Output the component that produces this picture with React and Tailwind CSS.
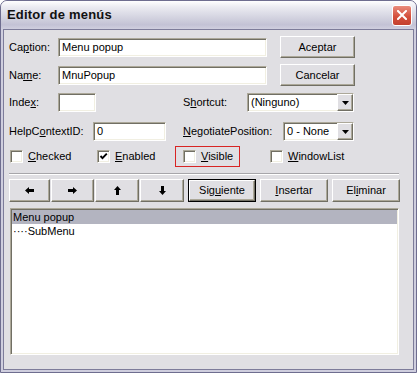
import React from 'react'

const FONT = { fontFamily: '"Liberation Sans", Arial, sans-serif' }

// sunken field border, classic XP look
const SUNKEN =
  'bg-white border border-t-[#aca899] border-l-[#aca899] border-b-white border-r-white shadow-[inset_1px_1px_0_#716f64,inset_-1px_-1px_0_#f1efe2]'
const RAISED =
  'bg-[#e0dfe3] border border-t-white border-l-white border-b-[#716f64] border-r-[#716f64] shadow-[inset_-1px_-1px_0_#aca899]'

function U({ children }) {
  return <span className="underline underline-offset-[1px]">{children}</span>
}

function Field({ className, value }) {
  return (
    <div className={`h-[19px] flex items-center pl-[3px] text-[11px] text-black ${SUNKEN} ${className}`}>
      {value}
    </div>
  )
}

function Btn({ className, children }) {
  return (
    <div className={`flex items-center justify-center text-[11px] text-black ${RAISED} ${className}`}>
      {children}
    </div>
  )
}

function Select({ className, value }) {
  return (
    <div className={`h-[19px] flex items-stretch text-[11px] text-black ${SUNKEN} ${className}`}>
      <div className="flex-1 flex items-center pl-[3px]">{value}</div>
      <div className={`w-[16px] flex items-center justify-center ${RAISED}`}>
        <svg width="7" height="4" viewBox="0 0 7 4">
          <polygon points="0,0 7,0 3.5,4" fill="#000" />
        </svg>
      </div>
    </div>
  )
}

function Check({ checked }) {
  return (
    <div className={`w-[13px] h-[13px] flex items-center justify-center ${SUNKEN}`}>
      {checked && (
        <svg width="9" height="9" viewBox="0 0 9 9">
          <path d="M1.5 4 L3.5 6.2 L7.8 1.6" stroke="#000" strokeWidth="1.9" fill="none" />
        </svg>
      )}
    </div>
  )
}

function Arrow({ dir }) {
  const pts = {
    left: '0,3.5 4,0 4,2 9,2 9,5 4,5 4,7',
    right: '9,3.5 5,0 5,2 0,2 0,5 5,5 5,7',
  }
  if (dir === 'left' || dir === 'right') {
    return (
      <svg width="9" height="7" viewBox="0 0 9 7">
        <polygon points={pts[dir]} fill="#000" />
      </svg>
    )
  }
  const v = dir === 'up' ? '3.5,0 7,4 5,4 5,9 2,9 2,4 0,4' : '3.5,9 7,5 5,5 5,0 2,0 2,5 0,5'
  return (
    <svg width="7" height="9" viewBox="0 0 7 9">
      <polygon points={v} fill="#000" />
    </svg>
  )
}

export default function App() {
  return (
    <div style={FONT} className="w-[417px] h-[373px] flex flex-col bg-[#cfcede] border border-[#6e6d8f] rounded-t-[7px] overflow-hidden">
      {/* title bar */}
      <div className="h-[28px] shrink-0 flex items-center justify-between pl-[6px] pr-[4px] bg-[linear-gradient(to_bottom,#ffffff_0%,#ececf2_20%,#d6d6e2_55%,#c3c2d5_85%,#d0cfdf_100%)]">
        <span className="text-[13px] font-bold text-[#111] tracking-[0.2px]">Editor de menús</span>
        <div className="w-[20px] h-[21px] rounded-[3px] border border-white bg-[linear-gradient(to_bottom,#e98c7c,#d4503d_55%,#c4402e)] flex items-center justify-center">
          <svg width="10" height="10" viewBox="0 0 10 10">
            <path d="M1 1 L9 9 M9 1 L1 9" stroke="#fff" strokeWidth="2" strokeLinecap="square" />
          </svg>
        </div>
      </div>

      {/* body */}
      <div className="flex-1 mx-[2px] mb-[2px] border border-[#7d7c9a] bg-[#e0dfe3] flex flex-col pl-[5px] pt-[6px] text-[11px] text-black">
        <div className="flex items-center h-[22px]">
          <span className="w-[49px]">Ca<U>p</U>tion:</span>
          <Field className="w-[209px]" value="Menu popup" />
          <Btn className="ml-[13px] w-[75px] h-[22px]">Aceptar</Btn>
        </div>
        <div className="flex items-center h-[22px] mt-[6px]">
          <span className="w-[49px]">Na<U>m</U>e:</span>
          <Field className="w-[209px]" value="MnuPopup" />
          <Btn className="ml-[13px] w-[75px] h-[22px]">Cancelar</Btn>
        </div>
        <div className="flex items-center h-[19px] mt-[7px]">
          <span className="w-[49px]">Inde<U>x</U>:</span>
          <Field className="w-[38px]" value="" />
          <span className="ml-[87px] w-[64px]">S<U>h</U>ortcut:</span>
          <Select className="w-[107px]" value="(Ninguno)" />
        </div>
        <div className="flex items-center h-[19px] mt-[10px]">
          <span className="w-[84px]">HelpC<U>o</U>ntextID:</span>
          <Field className="w-[73px]" value="0" />
          <span className="ml-[17px] w-[100px]"><U>N</U>egotiatePosition:</span>
          <Select className="w-[71px]" value="0 - None" />
        </div>
        <div className="flex items-center h-[21px] mt-[5px]">
          <div className="flex items-center w-[88px] pl-[1px]">
            <Check />
            <span className="ml-[5px]"><U>C</U>hecked</span>
          </div>
          <div className="flex items-center w-[78px]">
            <Check checked />
            <span className="ml-[5px]"><U>E</U>nabled</span>
          </div>
          <div className="flex items-center w-[65px] h-[21px] border border-[#d82424] pl-[7px]">
            <Check />
            <span className="ml-[5px]"><U>V</U>isible</span>
          </div>
          <div className="flex items-center ml-[30px]">
            <Check />
            <span className="ml-[5px]"><U>W</U>indowList</span>
          </div>
        </div>
        <div className="w-[390px] mt-[6px] border-t border-[#a7a6aa] border-b border-b-white" />
        <div className="flex items-center h-[23px] mt-[4px]">
          <Btn className="w-[41px] h-[23px]"><Arrow dir="left" /></Btn>
          <Btn className="ml-[1px] w-[43px] h-[23px]"><Arrow dir="right" /></Btn>
          <Btn className="ml-[1px] w-[44px] h-[23px]"><Arrow dir="up" /></Btn>
          <Btn className="ml-[1px] w-[44px] h-[23px]"><Arrow dir="down" /></Btn>
          <div className="ml-[4px] border border-black">
            <Btn className="w-[66px] h-[21px]">Sig<U>u</U>iente</Btn>
          </div>
          <Btn className="ml-[4px] w-[68px] h-[23px]"><U>I</U>nsertar</Btn>
          <Btn className="ml-[4px] w-[68px] h-[23px]">El<U>i</U>minar</Btn>
        </div>
        <div className={`mt-[6px] ml-[1px] w-[389px] h-[147px] flex flex-col pt-[1px] pl-[1px] pr-[1px] ${SUNKEN}`}>
          <div className="h-[14px] bg-[#b3b4c0] flex items-center pl-[1px]">Menu popup</div>
          <div className="h-[14px] flex items-center pl-[1px]">····SubMenu</div>
        </div>
      </div>
    </div>
  )
}
